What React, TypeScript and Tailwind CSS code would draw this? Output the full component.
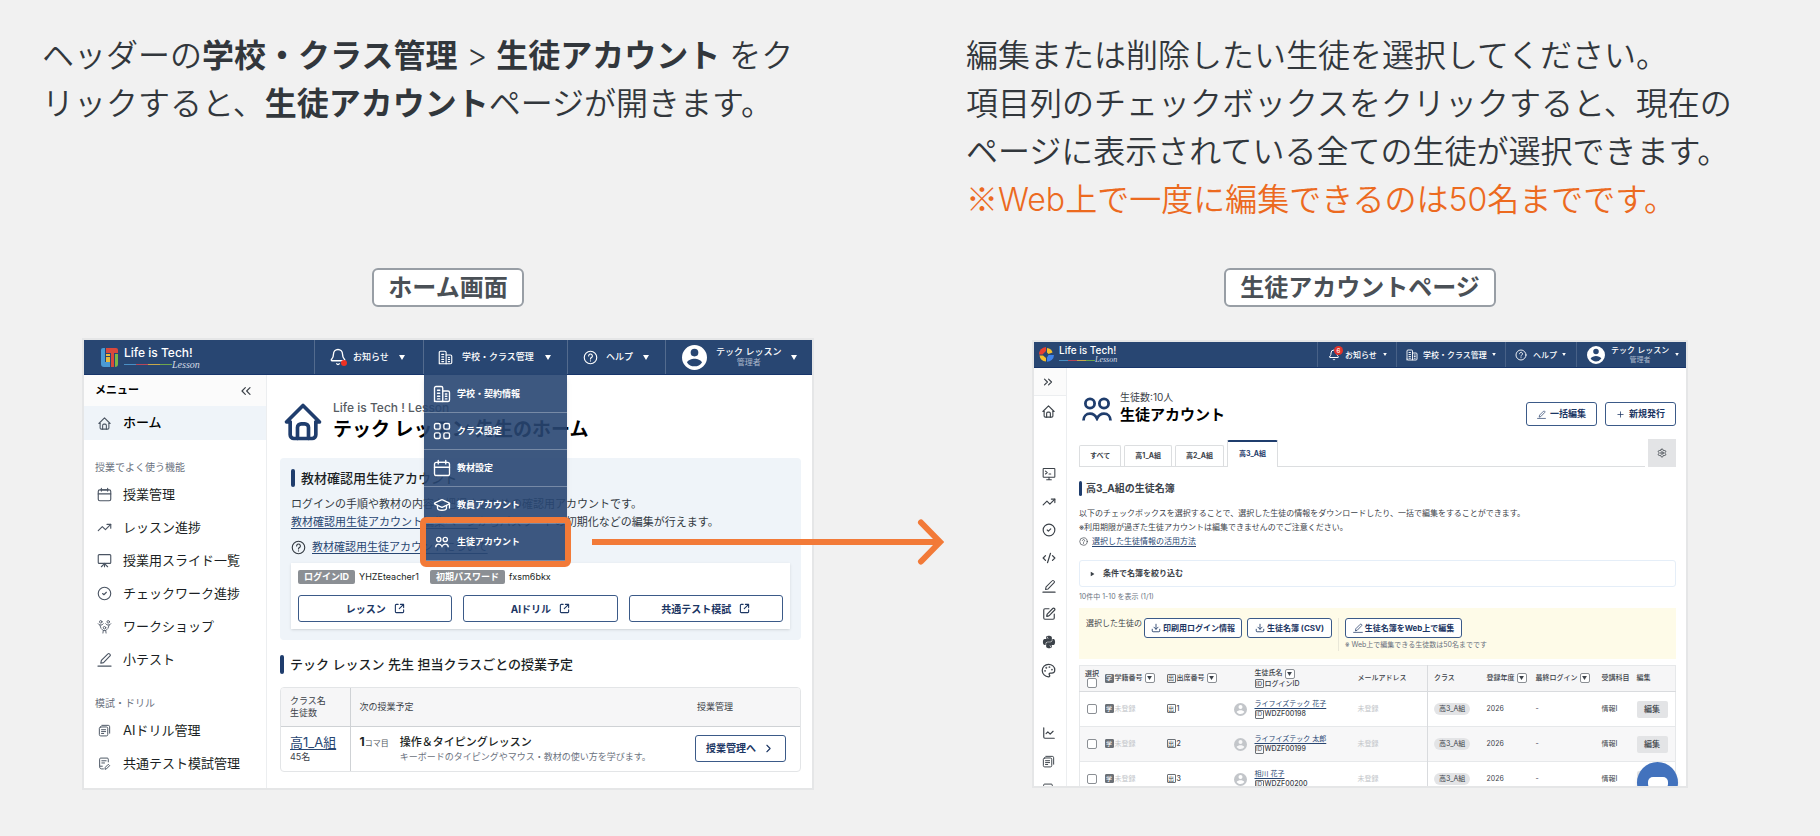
import type { ReactNode } from 'react';
import {
  Bell,
  ChartLine,
  ChevronRight,
  ChevronsLeft,
  ChevronsRight,
  CircleCheck,
  CodeXml,
  Download,
  GraduationCap,
  Palette,
  PenLine,
  Plus,
  Presentation,
  Settings,
  SquarePen,
  TrendingUp,
} from 'lucide-react';
import { FaPython } from 'react-icons/fa';
import { TbHome } from 'react-icons/tb';
import { clsx } from 'clsx';

type IconProps = { className?: string };

function Svg({ className, children, width = 1.8 }: IconProps & { children: ReactNode; width?: number }) {
  return (
    <svg
      viewBox="0 0 24 24"
      fill="none"
      stroke="currentColor"
      strokeWidth={width}
      strokeLinecap="round"
      strokeLinejoin="round"
      className={clsx('shrink-0', className)}
      aria-hidden="true"
    >
      {children}
    </svg>
  );
}

function BuildingIcon({ className }: IconProps) {
  return (
    <Svg className={className}>
      <path d="M2 22V4a2 2 0 0 1 2-2h7a2 2 0 0 1 2 2v18H4a2 2 0 0 1-2-2" />
      <path d="M13 8h7a2 2 0 0 1 2 2v10a2 2 0 0 1-2 2h-7" />
      <path d="M6 7h3M6 11h3M6 15h3M6 18.5h3M16.5 12h2M16.5 15h2M16.5 18.5h2" />
    </Svg>
  );
}

function CalendarIcon({ className }: IconProps) {
  return (
    <Svg className={className}>
      <rect x="2" y="4.500" width="20" height="17.500" rx="2.500" />
      <path d="M7 2v4.500M17 2v4.500M2 11h20M6 4.500h12" />
    </Svg>
  );
}

function GridIcon({ className }: IconProps) {
  return (
    <Svg className={className}>
      <rect x="2" y="2" width="7.500" height="7.500" rx="2" />
      <rect x="14.500" y="2" width="7.500" height="7.500" rx="2" />
      <rect x="2" y="14.500" width="7.500" height="7.500" rx="2" />
      <rect x="14.500" y="14.500" width="7.500" height="7.500" rx="2" />
    </Svg>
  );
}

function PeopleIcon({ className }: IconProps) {
  return (
    <svg viewBox="0 0 30 24" fill="none" stroke="currentColor" strokeWidth="2.800" className={clsx('shrink-0', className)} aria-hidden="true">
      <circle cx="8" cy="6.500" r="4.600" />
      <circle cx="22" cy="6.500" r="4.600" />
      <path d="M1.500 23.500c0-4 2.700-6.800 6.500-6.800 3.200 0 5.500 1.800 7 4.800 1.500-3 3.800-4.800 7-4.800 3.800 0 6.500 2.800 6.500 6.800" />
    </svg>
  );
}

function HelpIcon({ className }: IconProps) {
  return (
    <Svg className={className}>
      <circle cx="12" cy="12" r="10" />
      <path d="M9 9.500a3 3 0 1 1 4.500 2.600c-1 .6-1.500 1.100-1.500 2.200" />
      <path d="M12 17.300v.2" />
    </Svg>
  );
}

function MonitorIcon({ className }: IconProps) {
  return (
    <Svg className={className}>
      <rect x="2" y="2.500" width="20" height="15" rx="1" />
      <path d="M12 17.500V22M8 22h8M6 7l3 2.500L6 12M12 12h3" />
    </Svg>
  );
}

function SlideIcon({ className }: IconProps) {
  return (
    <Svg className={className}>
      <rect x="2" y="2.500" width="20" height="14" rx="1.500" />
      <path d="M12 16.500V22M12 17l-5 5M12 17l5 5" />
    </Svg>
  );
}

function PencilIcon({ className }: IconProps) {
  return (
    <Svg className={className}>
      <path d="M6 18l1-4.500L17.500 3a1.700 1.700 0 0 1 2.500 0l.8.800a1.700 1.700 0 0 1 0 2.500L10.500 17z" />
      <path d="M1.500 22.500h21" />
    </Svg>
  );
}

function DocsIcon({ className }: IconProps) {
  return (
    <Svg className={className}>
      <path d="M7 2.500h12a2.500 2.500 0 0 1 2.500 2.500v12" />
      <rect x="2.500" y="5.500" width="15.500" height="16.500" rx="2.500" />
      <path d="M6.500 10.500h7.500M6.500 14h7.500M6.500 17.500h4" />
    </Svg>
  );
}

function DocPenIcon({ className }: IconProps) {
  return (
    <Svg className={className}>
      <path d="M19 9V4a2 2 0 0 0-2-2H5a2 2 0 0 0-2 2v14c0 3 2 4 4 4h3" />
      <path d="M7 7h8M7 11h5M3.500 17H8M13 22l.5-3 5.500-5.500 2.500 2.500L16 21.500z" />
    </Svg>
  );
}

function WorkshopIcon({ className }: IconProps) {
  return (
    <Svg className={className} width={1.4}>
      <circle cx="6" cy="4.500" r="2" />
      <circle cx="18" cy="4.500" r="2" />
      <circle cx="12" cy="14" r="2" />
      <path d="M2 7.500l2 2h4l2-2M4.500 9.500l2 5.500M22 7.500l-2 2h-4l-2-2M19.500 9.500l-2 5.500M8 16.500l2 2h4l2-2M10 18.500l-.5 4M14 18.500l.5 4" />
    </Svg>
  );
}

function ExternalIcon({ className }: IconProps) {
  return (
    <Svg className={className} width={2.4}>
      <path d="M9 3H5a2 2 0 0 0-2 2v14a2 2 0 0 0 2 2h14a2 2 0 0 0 2-2v-4M14 3h7v7M21 3l-9.500 9.500" />
    </Svg>
  );
}

function AvatarIcon({ className }: IconProps) {
  return (
    <svg viewBox="0 0 24 24" className={clsx('shrink-0', className)} aria-hidden="true" fillRule="evenodd" fill="currentColor">
      <path d="M12 0a12 12 0 1 0 0 24 12 12 0 0 0 0-24zm0 3.600a3.700 3.700 0 1 1 0 7.400 3.700 3.700 0 0 1 0-7.400zM12 20.500c-3 0-5.600-1.500-7.200-3.800 1-2.400 4.500-3.500 7.200-3.500s6.200 1.100 7.200 3.500A8.700 8.700 0 0 1 12 20.500z" />
    </svg>
  );
}

function Caret({ className }: IconProps) {
  return (
    <svg viewBox="0 0 6 5" className={clsx('shrink-0 fill-current', className)} aria-hidden="true">
      <path d="M0 0h6L3 5z" />
    </svg>
  );
}

function BlockLogo() {
  return (
    <svg viewBox="0 0 17 19" className="h-[19px] w-[17px] shrink-0" aria-hidden="true">
      <path d="M0 2a2 2 0 0 1 2-2h2v14h5v5H3a3 3 0 0 1-3-3z" fill="#4a9ad4" />
      <path d="M5 0h10a2 2 0 0 1 2 2v3H5z" fill="#d8493c" />
      <path d="M10 5h3v14h-3z" fill="#d8493c" />
      <path d="M5 6h4v2H5zM5 9h4v5H5z" fill="#e9b93c" />
      <path d="M14 6h3v10a3 3 0 0 1-3 3z" fill="#7db544" />
    </svg>
  );
}

function WheelLogo() {
  return (
    <svg viewBox="0 0 15 15" className="size-[15px] shrink-0" aria-hidden="true">
      <path d="M7 0v4L3.500 7.500H0A7.500 7.500 0 0 1 7 0z" fill="#e8402f" />
      <path d="M8 1c3 .3 5 2 5.500 4.500L9.500 7 8 5.500z" fill="#f5c02c" />
      <path d="M.5 8.500H4L7 11v3.500A7 7 0 0 1 .5 8.500z" fill="#f5c02c" />
      <path d="M9.500 8H15a7 7 0 0 1-7 6.800V10.500z" fill="#3f83ea" />
    </svg>
  );
}

const headingBar = 'shrink-0 rounded-full bg-[#1f3d6d]';
const outlineButton =
  'flex items-center justify-center rounded-[3px] border border-[#3b5a88] bg-white font-bold text-[#1c3663] whitespace-nowrap';

function Instructions({ children, className }: { children: ReactNode; className?: string }) {
  return <p className={clsx('min-h-[192px] text-[32px] leading-[48px] font-[350] text-[#32373c]', className)}>{children}</p>;
}

function ScreenLabel({ children }: { children: ReactNode }) {
  return (
    <h2 className="mx-auto mt-11 w-fit rounded-md border-2 border-[#989ea5] bg-white px-[14px] text-2xl leading-[35px] font-bold text-[#4a5056]">
      {children}
    </h2>
  );
}

const schoolMenu = [
  { name: '学校・契約情報', icon: <BuildingIcon className="size-[18px]" /> },
  { name: 'クラス設定', icon: <GridIcon className="size-[18px]" /> },
  { name: '教材設定', icon: <CalendarIcon className="size-[18px]" /> },
  { name: '教員アカウント', icon: <GraduationCap className="size-[18px] shrink-0" strokeWidth={1.8} /> },
  { name: '生徒アカウント', icon: <PeopleIcon className="mx-[2px] h-3 w-[14px]" /> },
];

function SchoolMenu() {
  return (
    <ul className="absolute inset-x-0 top-full z-10 bg-[#284672]/90 pt-[2px] shadow-md">
      {schoolMenu.map((item, i) => (
        <li key={item.name} className="relative border-b border-white/30">
          <a href="#" className="flex h-9 items-center gap-1.5 pl-[9px] text-[9px] font-bold text-white">
            {item.icon}
            {item.name}
          </a>
          {i === schoolMenu.length - 1 && (
            <span className="absolute -inset-x-1 -inset-y-[7px] rounded-md border-6 border-[#f27a38]" />
          )}
        </li>
      ))}
    </ul>
  );
}

const homeMenu = [
  { name: '授業管理', icon: <CalendarIcon className="size-[15px]" /> },
  { name: 'レッスン進捗', icon: <TrendingUp className="size-[15px]" strokeWidth={1.8} /> },
  { name: '授業用スライド一覧', icon: <SlideIcon className="size-[15px]" /> },
  { name: 'チェックワーク進捗', icon: <CircleCheck className="size-[15px]" strokeWidth={1.8} /> },
  { name: 'ワークショップ', icon: <WorkshopIcon className="size-[15px]" /> },
  { name: '小テスト', icon: <PencilIcon className="size-[15px]" /> },
];

const examMenu = [
  { name: 'AIドリル管理', icon: <DocsIcon className="size-[13px]" /> },
  { name: '共通テスト模試管理', icon: <DocPenIcon className="size-[13px]" /> },
];

function SideGroup({ title, items }: { title: string; items: { name: string; icon: ReactNode }[] }) {
  return (
    <div className="pt-[18px]">
      <h3 className="mb-[2px] pl-[11px] text-[10px] leading-[18px] text-[#6b7280]">{title}</h3>
      {items.map((item) => (
        <a key={item.name} href="#" className="flex h-[33px] items-center gap-[11px] pl-3 text-[13px] text-[#1b1f24]">
          <span className="flex w-4 justify-center text-[#4b5563]">{item.icon}</span>
          {item.name}
        </a>
      ))}
    </div>
  );
}

function HomeScreen() {
  return (
    <div className="relative mx-10 mt-[31px] border-2 border-[#e5e6e7] bg-white whitespace-nowrap">
      <header className="flex h-[35px] border-b border-[#17356a] bg-[#284672] text-[9px] font-medium text-white">
        <div className="flex flex-1 items-center gap-[6px] pl-[17px]">
          <BlockLogo />
          <div className="flex flex-col">
            <span className="text-xs leading-[14px] font-medium">Life is Tech!</span>
            <span className="flex h-[9px] items-center">
              <span className="h-px w-3 bg-[#4a8fc4]" />
              <span className="h-px w-3 bg-[#b5485a]" />
              <span className="h-px w-3 bg-[#c8a84a]" />
              <span className="h-px w-3 bg-[#6fa54c]" />
              <i className="font-['Liberation_Serif',serif] text-[10px] leading-[9px] font-normal text-[#d5dce6]">Lesson</i>
            </span>
          </div>
        </div>
        <button type="button" className="flex w-[109px] items-center border-l border-white/20 pl-[14px]">
          <span className="relative">
            <Bell className="size-[18px]" strokeWidth={1.8} />
            <span className="absolute right-0 bottom-0 size-[6px] rounded-full bg-[#ef3224]" />
          </span>
          <span className="ml-[6px]">お知らせ</span>
          <Caret className="ml-[10px] h-[5px] w-[6px]" />
        </button>
        <div className="relative w-[144px] border-l border-white/20">
          <button type="button" className="flex h-full items-center pl-[14px]">
            <BuildingIcon className="size-[15px]" />
            <span className="ml-[9px]">学校・クラス管理</span>
            <Caret className="ml-[11px] h-[5px] w-[6px]" />
          </button>
          <SchoolMenu />
        </div>
        <button type="button" className="flex w-[98px] items-center border-l border-white/20 pl-[15px]">
          <HelpIcon className="size-[15px]" />
          <span className="ml-[8px]">ヘルプ</span>
          <Caret className="ml-[10px] h-[5px] w-[6px]" />
        </button>
        <button type="button" className="flex w-[147px] items-center border-l border-white/20 pl-[16px]">
          <AvatarIcon className="size-[25px]" />
          <span className="ml-[9px] flex flex-col text-center">
            <span className="leading-[11px]">テック レッスン</span>
            <span className="text-[8px] leading-[11px] font-normal text-[#aab7ca]">管理者</span>
          </span>
          <Caret className="ml-[10px] h-[5px] w-[6px]" />
        </button>
      </header>

      <div className="flex">
        <nav className="w-[183px] shrink-0 border-r border-[#eceef0]">
          <div className="flex h-[31px] items-center justify-between bg-[#fbfbfb] pr-[12px] pl-[11px] text-[11px] font-bold">
            メニュー
            <button type="button" aria-label="閉じる">
              <ChevronsLeft className="size-4 text-[#3c4249]" strokeWidth={1.8} />
            </button>
          </div>
          <a href="#" className="flex h-[34px] items-center gap-[11px] bg-[#eff4f9] pl-3 text-[13px] font-medium">
            <span className="flex w-4 justify-center text-[#4b5563]">
              <TbHome className="size-[15px]" strokeWidth={1.7} />
            </span>
            ホーム
          </a>
          <SideGroup title="授業でよく使う機能" items={homeMenu} />
          <SideGroup title="模試・ドリル" items={examMenu} />
        </nav>

        <main className="min-w-0 flex-1 pt-[25px] pr-[11px] pb-4 pl-[13px]">
          <div className="flex items-center gap-[8px] pl-[1px]">
            <TbHome className="size-[44px] shrink-0 text-[#1f3d6d]" strokeWidth={2} />
            <div>
              <p className="text-xs leading-4 font-medium text-[#565b62]">Life is Tech ! Lesson</p>
              <h3 className="text-[19px] leading-7 font-bold">テック レッスン 先生のホーム</h3>
            </div>
          </div>

          <section className="mt-[14px] rounded-sm bg-[#eff4f9] px-[11px] pt-[10px] pb-[11px] text-[11px] leading-[18px] text-[#333a42]">
            <h4 className="flex items-center gap-[6px] text-[13px] leading-5 font-medium text-[#1b1f24]">
              <span className={clsx(headingBar, 'h-[18px] w-1')} />
              教材確認用生徒アカウント
            </h4>
            <p className="mt-[7px]">
              ログインの手順や教材の内容を把握するための確認用アカウントです。
              <br />
              <a href="#" className="text-[#284672] underline underline-offset-2">
                教材確認用生徒アカウント編集ページ
              </a>
              からパスワードの初期化などの編集が行えます。
            </p>
            <p className="mt-[7px] flex items-center gap-[6px]">
              <HelpIcon className="size-[15px]" />
              <a href="#" className="text-[#284672] underline underline-offset-2">
                教材確認用生徒アカウントについて
              </a>
            </p>
            <div className="mt-[7px] bg-white p-[7px] shadow-sm">
              <p className="flex items-center text-[9px] leading-[14px] text-[#1b1f24]">
                <span className="rounded-xs bg-[#8b8f94] px-[6px] font-bold text-white">ログインID</span>
                <span className="ml-[4px]">YHZEteacher1</span>
                <span className="ml-[11px] rounded-xs bg-[#8b8f94] px-[6px] font-bold text-white">初期パスワード</span>
                <span className="ml-[4px]">fxsm6bkx</span>
              </p>
              <div className="mt-[11px] grid grid-cols-3 gap-[11px]">
                {['レッスン', 'AIドリル', '共通テスト模試'].map((name) => (
                  <button key={name} type="button" className={clsx(outlineButton, 'h-[27px] gap-2 text-[10px]')}>
                    {name}
                    <ExternalIcon className="size-[11px]" />
                  </button>
                ))}
              </div>
            </div>
          </section>

          <h3 className="mt-[14px] flex items-center gap-[6px] text-[13px] leading-5 font-medium text-[#1b1f24]">
            <span className={clsx(headingBar, 'h-[19px] w-1')} />
            テック レッスン 先生 担当クラスごとの授業予定
          </h3>
          <div className="mt-[13px] overflow-hidden rounded-sm border border-[#e3e5e7]">
            <table className="w-full text-left text-[9px]">
              <thead className="bg-[#f6f6f7] text-[#3c4249]">
                <tr className="h-[38px] border-b border-[#cfd2d5]">
                  <th className="w-[69px] border-r border-[#cfd2d5] pl-[9px] leading-3 font-normal">
                    クラス名
                    <br />
                    生徒数
                  </th>
                  <th className="pl-[9px] font-normal">次の授業予定</th>
                  <th className="w-[119px] pl-[16px] font-normal">授業管理</th>
                </tr>
              </thead>
              <tbody>
                <tr className="h-[45px]">
                  <td className="border-r border-[#cfd2d5] pl-[9px]">
                    <a href="#" className="block text-[13px] leading-4 text-[#284672] underline underline-offset-2">
                      高1_A組
                    </a>
                    <span className="block leading-[14px] text-[#3c4249]">45名</span>
                  </td>
                  <td className="pl-[9px]">
                    <div className="flex gap-[11px]">
                      <p className="leading-4 text-[#565b62]">
                        <b className="text-xs text-[#1b1f24]">1</b>
                        <span className="text-[8px]">コマ目</span>
                      </p>
                      <div>
                        <p className="text-[11px] leading-4 font-medium text-[#1b1f24]">操作＆タイピングレッスン</p>
                        <p className="leading-[14px] text-[#6b7280]">キーボードのタイピングやマウス・教材の使い方を学びます。</p>
                      </div>
                    </div>
                  </td>
                  <td>
                    <button type="button" className={clsx(outlineButton, 'ml-[14px] h-[27px] w-[91px] gap-[6px] text-[10px]')}>
                      授業管理へ
                      <ChevronRight className="size-[13px]" />
                    </button>
                  </td>
                </tr>
              </tbody>
            </table>
          </div>
        </main>
      </div>

      {/* Arrow to the next screen */}
      <svg viewBox="0 0 352 46" className="absolute top-[179px] left-[508px] h-[46px] w-[352px]" fill="none" stroke="#f27a38" strokeWidth="6" aria-hidden="true">
        <path d="M0 23h347" />
        <path d="M329 3.500L348 23l-19 19.500" strokeLinecap="round" />
      </svg>
    </div>
  );
}

const railTop = [
  <MonitorIcon className="size-[14px]" />,
  <TrendingUp className="size-[14px]" strokeWidth={2} />,
  <CircleCheck className="size-[14px]" strokeWidth={2} />,
  <CodeXml className="size-[14px]" strokeWidth={2.2} />,
  <PencilIcon className="size-[14px]" />,
  <SquarePen className="size-[14px]" strokeWidth={2} />,
  <FaPython className="size-[14px]" />,
  <Palette className="size-[15px]" strokeWidth={2} />,
];

const railBottom = [
  <ChartLine className="size-[14px]" strokeWidth={2} />,
  <DocsIcon className="size-[13px]" />,
  <DocPenIcon className="size-[13px]" />,
];

const students = [
  { no: 1, name: 'ライフイズテック 花子', login: 'WDZF00198' },
  { no: 2, name: 'ライフイズテック 太郎', login: 'WDZF00199' },
  { no: 3, name: '相川 花子', login: 'WDZF00200' },
];

function Tag({ children, solid }: { children: ReactNode; solid?: boolean }) {
  return (
    <span
      className={clsx(
        'mr-px inline-flex size-[9px] items-center justify-center rounded-[1px] border border-[#6b7076] text-[6px] leading-none',
        solid ? 'bg-[#6b7076] text-white' : 'text-[#4b5056]'
      )}
    >
      {children}
    </span>
  );
}

function SortButton({ label }: { label: string }) {
  return (
    <button type="button" aria-label={label} className="ml-[2px] inline-flex size-[10px] items-center justify-center rounded-[2px] border border-[#8b8f94] bg-white align-middle">
      <Caret className="h-1 w-[5px]" />
    </button>
  );
}

const smallCheck = 'block size-[10px] appearance-none rounded-[2px] border border-[#8b8f94] bg-white';

function StudentTable() {
  return (
    <table className="w-full table-fixed border border-[#e6e8ea] text-left text-[7px] text-[#3c4249]">
      <colgroup>
        <col className="w-[25px]" />
        <col className="w-[62px]" />
        <col className="w-[67px]" />
        <col className="w-[21px]" />
        <col />
        <col className="w-[70px]" />
        <col className="w-[59px]" />
        <col className="w-[49px]" />
        <col className="w-[66px]" />
        <col className="w-[35px]" />
        <col className="w-[39px]" />
      </colgroup>
      <thead className="bg-[#f6f6f7]">
        <tr className="h-[26px] border-b border-[#d9dbde] [&>th]:font-medium">
          <th className="pl-[5px] leading-[9px]">
            <label htmlFor="all">選択</label>
            <input id="all" type="checkbox" className={clsx(smallCheck, 'ml-[2px]')} />
          </th>
          <th><Tag solid>学</Tag>学籍番号<SortButton label="学籍番号で並べ替え" /></th>
          <th><Tag>出</Tag>出席番号<SortButton label="出席番号で並べ替え" /></th>
          <th />
          <th className="leading-[10px]">
            生徒氏名<SortButton label="生徒氏名で並べ替え" />
            <br />
            <Tag>ID</Tag>ログインID
          </th>
          <th>メールアドレス</th>
          <th className="border-l border-[#d9dbde] pl-[6px]">クラス</th>
          <th>登録年度<SortButton label="登録年度で並べ替え" /></th>
          <th>最終ログイン<SortButton label="最終ログインで並べ替え" /></th>
          <th>受講科目</th>
          <th>編集</th>
        </tr>
      </thead>
      <tbody>
        {students.map((s) => (
          <tr key={s.no} className="h-[35px] border-b border-[#e6e8ea] even:bg-[#f7f7f8]">
            <td className="pl-[7px]">
              <input type="checkbox" aria-label={s.name} className={smallCheck} />
            </td>
            <td className="text-[#c3c6ca]"><Tag solid>学</Tag>未登録</td>
            <td className="font-medium"><Tag>出</Tag>{s.no}</td>
            <td>
              <AvatarIcon className="size-[13px] text-[#c3c6ca]" />
            </td>
            <td className="leading-[10px]">
              <a href="#" className="text-[#284672] underline underline-offset-2">{s.name}</a>
              <br />
              <Tag>ID</Tag><span className="font-medium">{s.login}</span>
            </td>
            <td className="text-[#c3c6ca]">未登録</td>
            <td className="border-l border-[#d9dbde] pl-[6px]">
              <span className="inline-block rounded-full bg-[#e3e4e6] px-[5px] leading-3">高3_A組</span>
            </td>
            <td>2026</td>
            <td>-</td>
            <td>情報I</td>
            <td>
              <button type="button" className="h-[17px] w-[31px] rounded-[2px] bg-[#e3e4e6] text-[8px] font-medium">編集</button>
            </td>
          </tr>
        ))}
      </tbody>
    </table>
  );
}

function StudentScreen() {
  return (
    <div className="relative mx-[78px] mt-[33px] h-[448px] overflow-hidden border-2 border-[#e5e6e7] bg-white whitespace-nowrap">
      <header className="flex h-[26px] border-b border-[#17356a] bg-[#284672] text-[8px] font-medium text-white">
        <div className="flex flex-1 items-center gap-[5px] pl-[5px]">
          <WheelLogo />
          <div className="flex flex-col">
            <span className="text-[10px] leading-[11px] font-medium">Life is Tech!</span>
            <span className="flex h-[8px] items-center">
              <span className="h-px w-[9px] bg-[#4a8fc4]" />
              <span className="h-px w-[9px] bg-[#b5485a]" />
              <span className="h-px w-[9px] bg-[#c8a84a]" />
              <span className="h-px w-[9px] bg-[#6fa54c]" />
              <i className="font-['Liberation_Serif',serif] text-[8px] leading-[8px] font-normal text-[#d5dce6]">Lesson</i>
            </span>
          </div>
        </div>
        <button type="button" className="flex w-[79px] items-center border-l border-white/15 pl-[10px]">
          <span className="relative">
            <Bell className="size-[12px]" strokeWidth={2} />
            <span className="absolute -top-[3px] -right-[3px] size-[9px] rounded-full bg-[#e0342b] text-center text-[6px] leading-[9px]">6</span>
          </span>
          <span className="ml-[5px]">お知らせ</span>
          <Caret className="ml-[6px] h-[3px] w-1" />
        </button>
        <button type="button" className="flex w-[109px] items-center border-l border-white/15 pl-[9px]">
          <BuildingIcon className="size-[12px]" />
          <span className="ml-[5px]">学校・クラス管理</span>
          <Caret className="ml-[5px] h-[3px] w-1" />
        </button>
        <button type="button" className="flex w-[71px] items-center border-l border-white/15 pl-[9px]">
          <HelpIcon className="size-[12px]" />
          <span className="ml-[6px]">ヘルプ</span>
          <Caret className="ml-[5px] h-[3px] w-1" />
        </button>
        <button type="button" className="flex w-[110px] items-center border-l border-white/15 pl-[10px]">
          <AvatarIcon className="size-[18px]" />
          <span className="ml-[6px] flex flex-col text-center">
            <span className="leading-[9px]">テック レッスン</span>
            <span className="text-[7px] leading-[9px] font-normal text-[#aab7ca]">管理者</span>
          </span>
          <Caret className="ml-[6px] h-[3px] w-1" />
        </button>
      </header>

      <div className="flex">
        <nav className="w-[33px] shrink-0 border-r border-[#eceef0] text-[#3c4249]">
          <button type="button" aria-label="開く" className="flex h-7 w-full items-center justify-center border-b border-[#eceef0] bg-[#fbfbfb] pr-1">
            <ChevronsRight className="size-[14px]" strokeWidth={2} />
          </button>
          <a href="#" aria-label="ホーム" className="flex h-[30px] items-center justify-center pr-[3px]">
            <TbHome className="size-[15px]" strokeWidth={1.8} />
          </a>
          <div className="mt-[34px]">
            {railTop.map((icon, i) => (
              <a key={i} href="#" className="flex h-7 items-center justify-center pr-[3px]">{icon}</a>
            ))}
          </div>
          <div className="mt-[35px]">
            {railBottom.map((icon, i) => (
              <a key={i} href="#" className="flex h-7 items-center justify-center pr-[3px]">{icon}</a>
            ))}
          </div>
        </nav>

        <main className="min-w-0 flex-1 pt-[23px] pr-[10px] pl-3 text-[8px] text-[#3c4249]">
          <div className="flex items-end gap-2 text-[9px]">
            <PeopleIcon className="ml-[3px] h-[24px] w-[30px] self-center text-[#1f3d6d]" />
            <div className="flex-1">
              <p className="text-[10px] leading-3">生徒数:10人</p>
              <h3 className="text-[15px] leading-[23px] font-bold text-black">生徒アカウント</h3>
            </div>
            <button type="button" className={clsx(outlineButton, 'h-6 w-[71px] gap-[4px]')}>
              <PencilIcon className="size-[9px]" />
              一括編集
            </button>
            <button type="button" className={clsx(outlineButton, 'h-6 w-[71px] gap-[4px]')}>
              <Plus className="size-[9px]" />
              新規発行
            </button>
          </div>

          <div className="mt-[13px] flex items-end text-[7px] font-bold">
            <div className="flex flex-1 items-end gap-[3px] border-b border-[#dcdee0]">
              {['すべて', '高1_A組', '高2_A組'].map((tab) => (
                <button key={tab} type="button" className="h-[21px] rounded-t-[2px] border border-b-0 border-[#dcdee0] px-[10px]">{tab}</button>
              ))}
              <button type="button" className="-mb-px h-[27px] rounded-t-[2px] border border-t-2 border-b-0 border-[#dcdee0] border-t-[#1f3d6d] bg-white px-[11px] text-[#1f3d6d]">
                高3_A組
              </button>
            </div>
            <button type="button" aria-label="設定" className="ml-[3px] flex size-7 items-center justify-center bg-[#e3e4e6]">
              <Settings className="size-[10px]" />
            </button>
          </div>

          <h4 className="mt-[13px] flex items-center gap-1 text-[10px] leading-4 font-bold">
            <span className={clsx(headingBar, 'h-[15px] w-[3px]')} />
            高3_A組の生徒名簿
          </h4>
          <p className="mt-[10px] leading-[14px]">
            以下のチェックボックスを選択することで、選択した生徒の情報をダウンロードしたり、一括で編集をすることができます。
            <br />
            ※利用期限が過ぎた生徒アカウントは編集できませんのでご注意ください。
          </p>
          <p className="flex items-center gap-1 leading-[14px]">
            <HelpIcon className="size-[9px]" />
            <a href="#" className="text-[#284672] underline underline-offset-2">選択した生徒情報の活用方法</a>
          </p>
          <details className="mt-3 rounded-[3px] border border-[#e5eef8] leading-[25px] font-bold">
            <summary className="flex items-center pl-[10px]">
              <Caret className="mr-[8px] h-[4px] w-[5px] -rotate-90" />
              条件で名簿を絞り込む
            </summary>
          </details>
          <p className="mt-1 text-[7px] leading-3 text-[#6b7280]">10件中 1-10 を表示 (1/1)</p>

          <div className="mt-[5px] flex min-h-[51px] items-start bg-[#fefbe8] pt-[10px] pl-[7px]">
            <span className="leading-[11px]">選択した生徒の</span>
            <button type="button" className={clsx(outlineButton, 'ml-[2px] h-5 w-[98px] gap-[2px]')}>
              <Download className="size-[10px]" />
              印刷用ログイン情報
            </button>
            <button type="button" className={clsx(outlineButton, 'ml-[5px] h-5 w-[85px] gap-[2px]')}>
              <Download className="size-[10px]" />
              生徒名簿 (CSV)
            </button>
            <div className="ml-[6px] border-l border-[#e9e7d8] pl-[6px]">
              <button type="button" className={clsx(outlineButton, 'h-5 w-[117px] gap-[2px]')}>
                <PencilIcon className="size-[10px]" />
                生徒名簿をWeb上で編集
              </button>
              <p className="text-[7px] leading-[13px] text-[#6b7280]">※ Web上で編集できる生徒数は50名までです</p>
            </div>
          </div>
          <div className="mt-[6px]">
            <StudentTable />
          </div>
        </main>
      </div>

      <button type="button" aria-label="チャット" className="absolute right-[8px] -bottom-[17px] flex size-[41px] justify-center rounded-full bg-[#4272bd] pt-[15px] shadow-md">
        <span className="h-[12px] w-[20px] rounded-[5px] bg-white" />
      </button>
    </div>
  );
}

export default function App() {
  return (
    <div lang="ja" className="min-h-screen bg-[#f1f1f1] font-[family-name:Inter,'Noto_Sans_CJK_JP',sans-serif]">
      <div className="grid grid-cols-2 gap-[100px] pt-8 pr-[54px] pb-11 pl-[42px]">
        <section>
          <Instructions>
            ヘッダーの<b className="font-bold">学校・クラス管理</b> &gt; <b className="font-bold">生徒アカウント</b> をク
            <br />
            リックすると、<b className="font-bold">生徒アカウント</b>ページが開きます。
          </Instructions>
          <ScreenLabel>ホーム画面</ScreenLabel>
          <HomeScreen />
        </section>
        <section>
          <Instructions className="pl-3">
            編集または削除したい生徒を選択してください。
            <br />
            項目列のチェックボックスをクリックすると、現在の
            <br />
            ページに表示されている全ての生徒が選択できます。
            <br />
            <span className="text-[#ec6a1f]">
              <span className="font-[family-name:'Noto_Sans_CJK_JP',sans-serif] leading-none">※</span>
              Web上で一度に編集できるのは50名までです。
            </span>
          </Instructions>
          <ScreenLabel>生徒アカウントページ</ScreenLabel>
          <StudentScreen />
        </section>
      </div>
    </div>
  );
}
